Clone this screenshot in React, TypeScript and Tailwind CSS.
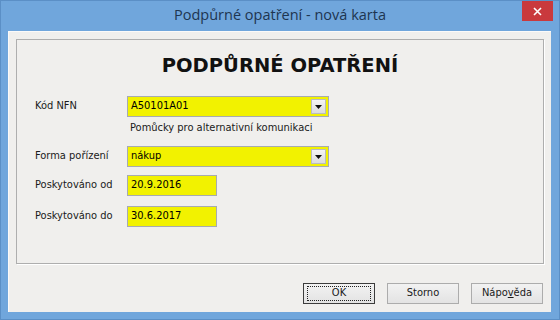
import React from 'react';

const label = 'w-[92px] shrink-0 text-[11px] text-[#1a1a1a]';
const field =
  'h-[21px] bg-[#f2f200] border border-[#a7abb0] flex items-center pl-[3px] text-[11px] text-black';

function ComboArrow() {
  return (
    <div className="ml-auto mr-[2px] w-[15px] h-[15px] border border-[#b9bcc0] bg-gradient-to-b from-[#f4f4f4] to-[#dcdcdc] flex items-center justify-center">
      <svg width="7" height="4" viewBox="0 0 7 4">
        <path d="M0 0h7L3.5 4z" fill="#111" />
      </svg>
    </div>
  );
}

function Btn({ children, focused }: { children: React.ReactNode; focused?: boolean }) {
  return (
    <div
      className={
        'w-[72px] h-[21px] flex items-center justify-center text-[11px] text-[#1a1a1a] bg-gradient-to-b from-[#f2f2f2] to-[#e3e3e3] ' +
        (focused ? 'border border-[#3c3c3c]' : 'border border-[#acacac]')
      }
    >
      {focused ? (
        <div className="w-[64px] h-[15px] border border-dotted border-[#222] flex items-center justify-center">
          {children}
        </div>
      ) : (
        children
      )}
    </div>
  );
}

export default function App() {
  return (
    <div
      className="w-[560px] h-[320px] bg-[#70a6dc] flex flex-col border border-[#5b8fc6]"
      style={{ fontFamily: '"DejaVu Sans Condensed", "DejaVu Sans", sans-serif' }}
    >
      {/* title bar */}
      <div className="h-[30px] shrink-0 relative flex items-center justify-center">
        <span
          className="text-[14.5px] text-[#1e3550] mt-[-2px]"
          style={{ fontFamily: '"Open Sans", "Noto Sans", sans-serif' }}
        >
          Podpůrné opatření - nová karta
        </span>
        <div className="absolute right-[6px] top-0 w-[31px] h-[20px] bg-[#c9393d] flex items-center justify-center">
          <svg width="9" height="9" viewBox="0 0 9 9">
            <path d="M1 1l7 7M8 1l-7 7" stroke="#fff" strokeWidth="1.6" />
          </svg>
        </div>
      </div>

      {/* client */}
      <div className="flex-1 flex px-[7px] pb-[7px] pr-[8px]">
        <div className="flex-1 bg-[#f0efed] border-l border-t border-[#fbfaf9] flex flex-col p-[7px] pb-[8px]">
          {/* panel */}
          <div className="h-[225px] border border-[#aeaeae] shadow-[1px_1px_0_#ffffff] flex flex-col pl-[18px]">
            <div className="pt-[13px] h-[56px] text-center text-[19.5px] leading-[26px] font-bold text-[#111] pr-[18px]"
              style={{ fontFamily: '"DejaVu Sans", Verdana, sans-serif' }}>
              PODPŮRNÉ OPATŘENÍ
            </div>

            <div className="flex items-center">
              <span className={label}>Kód NFN</span>
              <div className={field + ' w-[202px]'}>
                A50101A01
                <ComboArrow />
              </div>
            </div>
            <div className="pl-[95px] mt-[3px] h-[16px] text-[11px] leading-[16px] text-[#1a1a1a]">
              Pomůcky pro alternativní komunikaci
            </div>

            <div className="flex items-center mt-[10px]">
              <span className={label}>Forma pořízení</span>
              <div className={field + ' w-[202px]'}>
                nákup
                <ComboArrow />
              </div>
            </div>

            <div className="flex items-center mt-[8px]">
              <span className={label}>Poskytováno od</span>
              <div className={field + ' w-[90px]'}>20.9.2016</div>
            </div>

            <div className="flex items-center mt-[10px]">
              <span className={label}>Poskytováno do</span>
              <div className={field + ' w-[90px]'}>30.6.2017</div>
            </div>
          </div>

          {/* buttons */}
          <div className="mt-auto flex justify-end gap-[12px] pr-[1px]">
            <Btn focused>OK</Btn>
            <Btn>Storno</Btn>
            <Btn>
              <span>
                Nápo<span className="underline">v</span>ěda
              </span>
            </Btn>
          </div>
        </div>
      </div>
    </div>
  );
}
